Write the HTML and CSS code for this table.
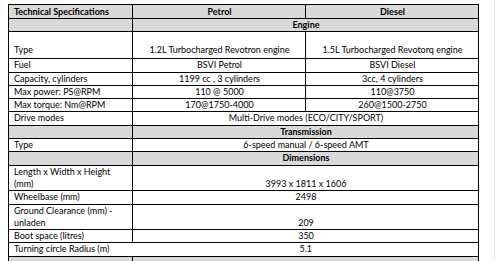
FILE: index.html
```html
<!DOCTYPE html>
<html>
<head>
<meta charset="utf-8">
<link rel="stylesheet" href="styles.css">
</head>
<body>
<div class="page">
<table class="spec">
  <colgroup><col class="c1"><col class="c2"><col class="c3"></colgroup>
  <tr class="hd"><th class="lbl">Technical Specifications</th><th>Petrol</th><th>Diesel</th></tr>
  <tr class="sec"><td></td><td colspan="2">Engine</td></tr>
  <tr class="tall"><td class="lbl">Type</td><td>1.2L Turbocharged Revotron engine</td><td>1.5L Turbocharged Revotorq engine</td></tr>
  <tr><td class="lbl">Fuel</td><td>BSVI Petrol</td><td>BSVI Diesel</td></tr>
  <tr><td class="lbl">Capacity, cylinders</td><td>1199 cc , 3 cylinders</td><td>3cc, 4 cylinders</td></tr>
  <tr><td class="lbl">Max power: PS@RPM</td><td class="nudge">110 @ 5000</td><td class="shift">110@3750</td></tr>
  <tr><td class="lbl">Max torque: Nm@RPM</td><td>170@1750-4000</td><td class="shift">260@1500-2750</td></tr>
  <tr><td class="lbl">Drive modes</td><td colspan="2">Multi-Drive modes (ECO/CITY/SPORT)</td></tr>
  <tr class="sec"><td></td><td colspan="2">Transmission</td></tr>
  <tr><td class="lbl">Type</td><td colspan="2">6-speed manual / 6-speed AMT</td></tr>
  <tr class="sec"><td></td><td colspan="2">Dimensions</td></tr>
  <tr><td class="lbl">Length x Width x Height<br>(mm)</td><td colspan="2">3993 x 1811 x 1606</td></tr>
  <tr><td class="lbl">Wheelbase (mm)</td><td colspan="2" class="off">2498</td></tr>
  <tr><td class="lbl">Ground Clearance (mm) -<br>unladen</td><td colspan="2" class="off">209</td></tr>
  <tr><td class="lbl">Boot space (litres)</td><td colspan="2" class="off">350</td></tr>
  <tr><td class="lbl open">Turning circle Radius (m)</td><td colspan="2" class="off">5.1</td></tr>
  <tr class="sec"><td></td><td colspan="2"></td></tr>
</table>
</div>
</body>
</html>
```
FILE: styles.css
```css
html, body {
  margin: 0;
  padding: 0;
  background: #ffffff;
}
.page {
  width: 495px;
  height: 261px;
  box-sizing: border-box;
  padding: 4px 0 0 8px;
  border-right: 1px solid #ececec;
  overflow: hidden;
}
.spec {
  border-collapse: collapse;
  table-layout: fixed;
  width: 470px;
  font-family: Lato, "Liberation Sans", sans-serif;
  font-size: 9px;
  color: #000;
}
.c1 { width: 124px; }
.c2 { width: 173px; }
.c3 { width: 173px; }
.spec th, .spec td {
  border: 1px solid #000;
  padding: 0 4px 0 5px;
  line-height: 12.3px;
  height: 12.3px;
  text-align: center;
  vertical-align: bottom;
  white-space: nowrap;
  overflow: visible;
}
.spec th { font-weight: bold; background: #d9d9d9; line-height: 13px; }
.spec .lbl { text-align: left; }
.sec td { background: #d9d9d9; font-weight: bold; }
.tall td { height: 24px; padding-bottom: 2px; }
.shift { padding-right: 24px; }
.nudge { padding-right: 12px; }
.off { padding-left: 30px; }
.spec .open { border-right: hidden; }
```
